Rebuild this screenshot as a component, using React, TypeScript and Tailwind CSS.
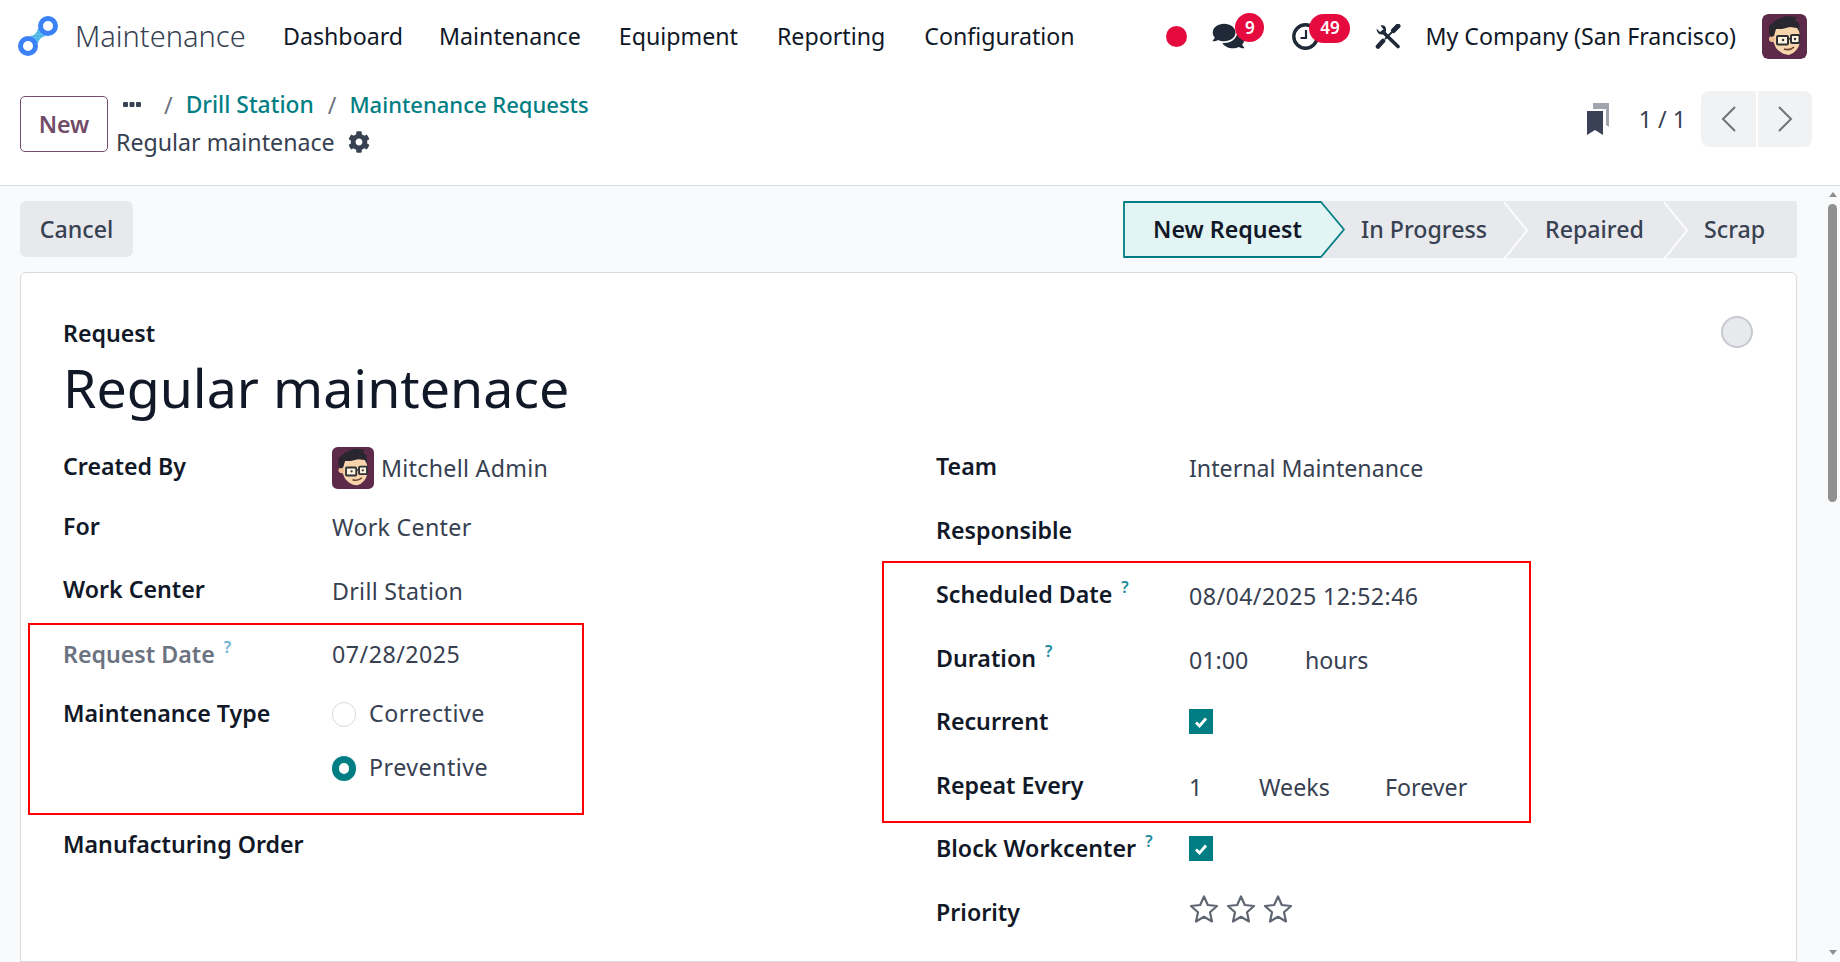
import { FaCog, FaComments } from 'react-icons/fa'

const font = { fontFamily: '"Noto Sans", sans-serif' }

function Logo() {
  return (
    <svg viewBox="0 0 40 40" className="h-[40px] w-[40px]">
      <path d="M12 20 Q19 19 20 12 L28 20 Q21 21 20 28 Z" fill="#5cc0e8" />
      <g fill="#3b9be8">
        <circle cx="17" cy="20" r="0.8" />
        <circle cx="20" cy="17" r="0.8" />
        <circle cx="20" cy="20" r="0.8" />
        <circle cx="23" cy="20" r="0.8" />
        <circle cx="20" cy="23" r="0.8" />
      </g>
      <circle cx="10" cy="30" r="7.5" fill="none" stroke="#3b82f6" strokeWidth="5" />
      <circle cx="30" cy="10" r="7.5" fill="none" stroke="#3b82f6" strokeWidth="5" />
    </svg>
  )
}

function Avatar({ size }: { size: string }) {
  return (
    <svg viewBox="0 0 45 45" className={size}>
      <rect width="45" height="45" rx="6" fill="#5d2b49" />
      <path d="M11 14 L37 12 L38 28 Q36 38 27 41 Q20 41 14 34 L11 27 Z" fill="#f6d5ac" />
      <circle cx="10" cy="25" r="3" fill="#eebf92" />
      <path d="M7 20 L7 12 L14 6 L24 2 L35 3 L33 6 L37 9 L38 19 L35 14 L28 13 L20 15 L14 15 L12 22 L9 23 Z" fill="#2a2630" />
      <rect x="15" y="22" width="11" height="8.5" rx="1" fill="#fff3e0" stroke="#2f3033" strokeWidth="2" />
      <rect x="29" y="21" width="8.5" height="8" rx="1" fill="#fff3e0" stroke="#2f3033" strokeWidth="2" />
      <path d="M26 25 L29 24.5" stroke="#2f3033" strokeWidth="1.5" />
      <circle cx="21" cy="26" r="1.2" fill="#2f3033" />
      <circle cx="33" cy="25" r="1.2" fill="#2f3033" />
      <path d="M22 35 Q28 37 32 33" fill="none" stroke="#6b3d2c" strokeWidth="1.6" />
    </svg>
  )
}

function ClockIcon() {
  return (
    <svg viewBox="0 0 27 27" className="h-[27px] w-[27px]">
      <circle cx="13.5" cy="13.5" r="11.7" fill="none" stroke="#1f2937" strokeWidth="3.4" />
      <path d="M14 7 V15 H8.5" fill="none" stroke="#1f2937" strokeWidth="2.2" />
    </svg>
  )
}

function ToolsIcon() {
  return (
    <svg viewBox="0 0 26 25" className="h-[25px] w-[26px]">
      <path d="M8 8 L23 22.5" stroke="#1f2937" strokeWidth="3.6" strokeLinecap="round" />
      <path d="M1.5 4.5 L5 8 L8.5 5.5 L5.5 1.5 Q10.5 0.5 11 5 Q11.5 9.5 7.5 10.5 Q2 11 1.5 4.5 Z" fill="#1f2937" />
      <path d="M18.5 6.5 L23 2" stroke="#1f2937" strokeWidth="5" strokeLinecap="round" />
      <path d="M18.5 6.5 L10 15" stroke="#1f2937" strokeWidth="1.8" />
      <path d="M3 22.5 L8 17" stroke="#1f2937" strokeWidth="4.6" strokeLinecap="round" />
    </svg>
  )
}

function Badge({ children, className }: { children: React.ReactNode; className: string }) {
  return (
    <span
      className={`absolute flex h-[29px] items-center justify-center rounded-full bg-[#e60b3f] text-[17px] font-semibold text-white ${className}`}
    >
      {children}
    </span>
  )
}

function Help({ light }: { light?: boolean }) {
  return (
    <sup className={`-top-[10px] ml-[9px] text-[16px] font-semibold ${light ? 'text-[#6db3d1]' : 'text-[#1b8b9c]'}`}>?</sup>
  )
}

function Check() {
  return (
    <span className="-mt-[4px] flex h-[25px] w-[24px] items-center justify-center bg-[#017e84]">
      <svg viewBox="0 0 16 16" className="h-[16px] w-[16px]">
        <path d="M3 8.5 L6.5 12 L13 4.5" fill="none" stroke="white" strokeWidth="2.8" />
      </svg>
    </span>
  )
}

function Star() {
  return (
    <svg viewBox="0 0 30 30" className="h-[30px] w-[30px]">
      <path
        d="M15 2.5 L18.8 11 L28 12 L21 18.2 L23 27.5 L15 22.8 L7 27.5 L9 18.2 L2 12 L11.2 11 Z"
        fill="none"
        stroke="#5f6672"
        strokeWidth="2.2"
        strokeLinejoin="round"
      />
    </svg>
  )
}

function Chevron() {
  return (
    <svg viewBox="0 0 24 57" className="absolute -right-[23px] top-0 z-10 h-[57px] w-[24px]">
      <path d="M0 0 L23 28.5 L0 57" fill="none" stroke="white" strokeWidth="1.6" />
    </svg>
  )
}

interface RowProps {
  label?: React.ReactNode
  height: string
  valueClass?: string
  labelClass?: string
  children?: React.ReactNode
}

function Row({ label, height, valueClass, labelClass, children }: RowProps) {
  return (
    <div className={`flex items-center ${height}`}>
      <div className={`w-[269px] font-semibold ${labelClass ?? 'text-[#111827]'}`}>{label}</div>
      <div className={`flex items-center tracking-[0.3px] text-[#374151] ${valueClass ?? 'pt-[2px]'}`}>{children}</div>
    </div>
  )
}

function RightRow({ label, height, children }: { label: React.ReactNode; height?: string; children?: React.ReactNode }) {
  return (
    <div className={`flex items-center ${height ?? 'h-[64px]'}`}>
      <div className="w-[253px] font-semibold text-[#111827]">{label}</div>
      <div className="flex items-center pt-[4px] text-[#374151]">{children}</div>
    </div>
  )
}

export default function App() {
  return (
    <div style={font} className="relative flex h-screen flex-col overflow-hidden bg-white text-[23.2px] text-[#374151]">
      {/* Top nav */}
      <header className="flex h-[72px] shrink-0 items-center pl-[18px] pr-[33px] text-[#111827]">
        <Logo />
        <span className="ml-[17px] w-[208px] text-[29px] font-light text-[#374151]">Maintenance</span>
        <nav className="flex gap-[36px]">
          <span>Dashboard</span>
          <span>Maintenance</span>
          <span className="ml-[2px]">Equipment</span>
          <span className="ml-[3px]">Reporting</span>
          <span className="ml-[3px]">Configuration</span>
        </nav>
        <div className="ml-auto flex items-center">
          <span className="h-[21px] w-[21px] rounded-full bg-[#e60b3f]" />
          <span className="relative ml-[25px] flex w-[80px] items-center">
            <FaComments className="h-[28px] w-[33px] text-[#1f2937]" />
            <Badge className="left-[23px] -top-[9px] w-[29px]">9</Badge>
          </span>
          <span className="relative flex w-[83px] items-center">
            <ClockIcon />
            <Badge className="left-[17px] -top-[9px] w-[41px]">49</Badge>
          </span>
          <ToolsIcon />
          <span className="ml-[24px]">My Company (San Francisco)</span>
          <span className="ml-[26px] overflow-hidden rounded-md">
            <Avatar size="block h-[45px] w-[45px]" />
          </span>
        </div>
      </header>

      {/* Control panel */}
      <div className="flex h-[114px] shrink-0 border-b border-[#d8dadd] pl-[20px] pr-[28px] pt-[24px]">
        <button className="h-[56px] w-[88px] rounded-[5px] border border-[#714b67] font-semibold text-[#714b67]">New</button>
        <div className="ml-[8px] -mt-[8px] flex flex-col">
          <div className="flex h-[34px] items-center">
            <svg viewBox="0 0 18 6" className="ml-[7px] h-[6px] w-[18px]">
              <rect x="0" y="0" width="5" height="5" rx="1" fill="#374151" />
              <rect x="6.5" y="0" width="5" height="5" rx="1" fill="#374151" />
              <rect x="13" y="0" width="5" height="5" rx="1" fill="#374151" />
            </svg>
            <span className="ml-[23px] text-[#6b7280]">/</span>
            <span className="ml-[13px] text-[22.8px] font-medium text-[#017e84]">Drill Station</span>
            <span className="ml-[14px] text-[#6b7280]">/</span>
            <span className="ml-[13px] -mt-[2px] text-[22px] font-medium text-[#017e84]">Maintenance Requests</span>
          </div>
          <div className="mt-[3px] flex h-[34px] items-center">
            <span>Regular maintenace</span>
            <FaCog className="ml-[13px] h-[22px] w-[22px]" />
          </div>
        </div>
        <div className="ml-auto -mt-[5px] flex h-[56px] items-center">
          <svg viewBox="0 0 22 32" className="h-[32px] w-[22px]">
            <path d="M6 0 H22 V24 L19 22 V6 H6 Z" fill="#a0a4ac" />
            <path d="M0 8 H16 V32 L8 27 L0 32 Z" fill="#3a4056" />
          </svg>
          <span className="ml-[30px]">1 / 1</span>
          <div className="ml-[15px] flex gap-[2px]">
            <span className="flex h-[56px] w-[55px] items-center justify-center rounded-l-[8px] bg-[#f1f2f4]">
              <svg viewBox="0 0 16 26" className="h-[26px] w-[16px]">
                <path d="M14 1 L2 13 L14 25" fill="none" stroke="#6f7278" strokeWidth="2" />
              </svg>
            </span>
            <span className="flex h-[56px] w-[54px] items-center justify-center rounded-r-[8px] bg-[#f1f2f4]">
              <svg viewBox="0 0 16 26" className="h-[26px] w-[16px]">
                <path d="M2 1 L14 13 L2 25" fill="none" stroke="#6f7278" strokeWidth="2" />
              </svg>
            </span>
          </div>
        </div>
      </div>

      {/* Form view */}
      <main className="flex min-h-0 flex-1 flex-col bg-[#f9fafb] pl-[20px] pr-[43px] pt-[14px]">
        <div className="flex h-[58px] shrink-0 items-center justify-between">
          <button className="h-[56px] w-[113px] rounded-[6px] bg-[#e7e9ed] font-medium text-[#374151]">Cancel</button>
          <div className="flex h-[57px] rounded-[3px] bg-[#e7e9ed] pt-[1px] font-medium">
            <div className="relative flex w-[198px] items-center pl-[30px] font-semibold text-[#111827]">
              <svg viewBox="0 0 222 57" className="absolute left-0 -top-[1px] h-[57px] w-[222px]">
                <path d="M1 1 H198 L221 28.5 L198 56 H1 Z" fill="#e2f4f3" stroke="#017e84" strokeWidth="1.8" strokeLinejoin="round" />
              </svg>
              <span className="relative whitespace-nowrap">New Request</span>
            </div>
            <div className="relative flex w-[184px] items-center pl-[40px]">
              In Progress
              <Chevron />
            </div>
            <div className="relative flex w-[160px] items-center pl-[40px]">
              Repaired
              <Chevron />
            </div>
            <div className="flex w-[132px] items-center pl-[39px]">Scrap</div>
          </div>
        </div>

        <section className="mt-[14px] flex-1 rounded-t-[6px] border border-[#d8dadd] bg-white pl-[42px] pt-[47px]">
          <div className="flex items-start justify-between">
            <div>
              <div className="h-[26px] leading-[26px] font-semibold text-[#111827]">Request</div>
              <h1 className="mt-[7px] h-[70px] text-[53.7px] leading-[70px] text-[#111827]">Regular maintenace</h1>
            </div>
            <span className="mr-[43px] -mt-[4px] h-[32px] w-[32px] rounded-full border-2 border-[#c7c9cf] bg-[#e7e9ed]" />
          </div>

          <div className="grid grid-cols-[873px_1fr]">
            <div className="pt-[12px]">
              <Row label="Created By" height="h-[62px]" valueClass="pt-[4px]">
                <Avatar size="h-[42px] w-[42px]" />
                <span className="ml-[7px]">Mitchell Admin</span>
              </Row>
              <Row label="For" height="h-[59px]">Work Center</Row>
              <Row label="Work Center" height="h-[66px]" valueClass="pt-[4px]">Drill Station</Row>
              <Row label={<>Request Date<Help light /></>} height="h-[64px]" labelClass="text-[#6b7280]" valueClass="tracking-[0.5px]">07/28/2025</Row>
              <Row label="Maintenance Type" height="h-[55px]" valueClass="pt-0">
                <span className="mt-[3px] h-[25px] w-[24px] rounded-full border border-[#d8dadd] bg-white" />
                <span className="ml-[13px] tracking-[0.5px]">Corrective</span>
              </Row>
              <Row height="h-[52px]" valueClass="pt-0">
                <span className="mt-[3px] h-[25px] w-[24px] rounded-full border-[7px] border-[#017e84] bg-white" />
                <span className="ml-[13px] tracking-[0.5px]">Preventive</span>
              </Row>
              <Row label="Manufacturing Order" height="h-[102px]" />
            </div>
            <div className="pt-[11px]">
              <RightRow label="Team">Internal Maintenance</RightRow>
              <RightRow label="Responsible" />
              <RightRow label={<>Scheduled Date<Help /></>}>
                <span className="tracking-[0.43px]">08/04/2025 12:52:46</span>
              </RightRow>
              <RightRow label={<>Duration<Help /></>}>
                <span className="w-[56px]">01:00</span>
                <span className="ml-[60px]">hours</span>
              </RightRow>
              <RightRow label="Recurrent" height="h-[63px]"><Check /></RightRow>
              <RightRow label="Repeat Every">
                <span className="w-[70px]">1</span>
                <span className="w-[126px]">Weeks</span>
                <span>Forever</span>
              </RightRow>
              <RightRow label={<>Block Workcenter<Help /></>} height="h-[63px]"><Check /></RightRow>
              <RightRow label="Priority">
                <span className="-mt-[11px] flex gap-[7px]">
                  <Star />
                  <Star />
                  <Star />
                </span>
              </RightRow>
            </div>
          </div>
        </section>
      </main>

      {/* Annotation boxes */}
      <div className="absolute left-[28px] top-[623px] h-[192px] w-[556px] border-2 border-[#ff0000]" />
      <div className="absolute left-[882px] top-[561px] h-[262px] w-[649px] border-2 border-[#ff0000]" />

      {/* Scrollbar */}
      <div className="absolute right-[3px] top-[192px] h-0 w-0 border-x-[4.5px] border-b-[5px] border-x-transparent border-b-[#8f8f8f]" />
      <div className="absolute right-[3px] top-[204px] h-[298px] w-[9px] rounded-full bg-[#8f8f8f]" />
      <div className="absolute right-[3px] top-[950px] h-0 w-0 border-x-[4.5px] border-t-[5px] border-x-transparent border-t-[#8f8f8f]" />
    </div>
  )
}
